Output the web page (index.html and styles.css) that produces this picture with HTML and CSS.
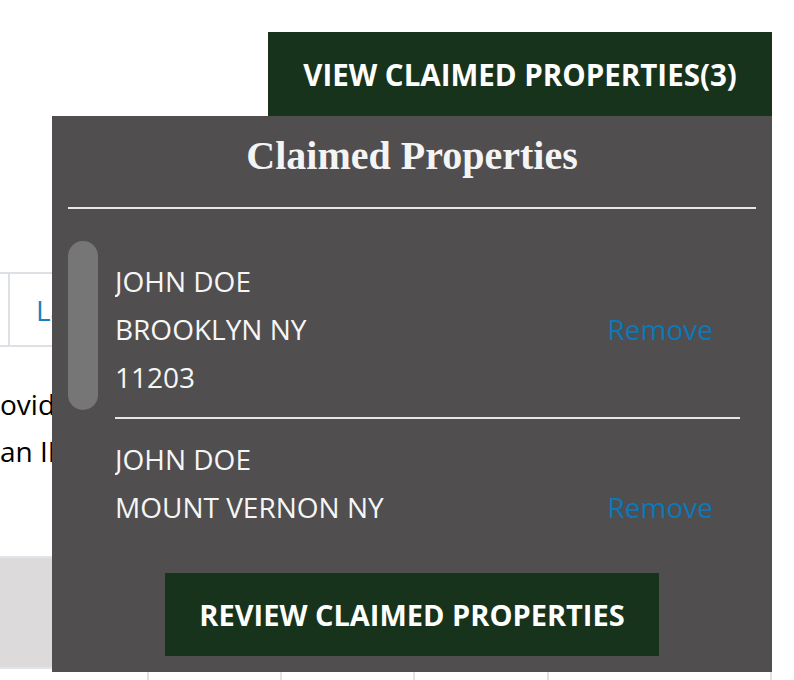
FILE: index.html
```html
<!DOCTYPE html>
<html lang="en">
<head>
<meta charset="utf-8">
<title>Claimed Properties</title>
<link rel="stylesheet" href="styles.css">
</head>
<body>
<div class="page">
  <header class="topbar">
    <button class="btn btn-view" type="button">VIEW CLAIMED PROPERTIES(3)</button>
  </header>

  <main class="content">
    <div class="tabs">
      <div class="tab tab-first"></div>
      <div class="tab"><a class="tab-link" href="#">La</a></div>
    </div>
    <p class="intro">ovided<br>an IND</p>
    <div class="band"></div>
    <div class="grid-row">
      <div class="cell c1"></div>
      <div class="cell c2"></div>
      <div class="cell c3"></div>
      <div class="cell c4"></div>
      <div class="cell c5"></div>
      <div class="cell c6"></div>
    </div>
  </main>

  <section class="dropdown">
    <h2 class="dd-title">Claimed Properties</h2>
    <hr class="dd-rule">
    <div class="dd-list">
      <div class="track"><div class="thumb"></div></div>
      <div class="items">
        <div class="item">
          <div class="addr">
            <div>JOHN DOE</div>
            <div>BROOKLYN NY</div>
            <div>11203</div>
          </div>
          <a class="remove" href="#">Remove</a>
        </div>
        <div class="item">
          <div class="addr">
            <div>JOHN DOE</div>
            <div>MOUNT VERNON NY</div>
            <div>10550</div>
          </div>
          <a class="remove" href="#">Remove</a>
        </div>
        <div class="item">
          <div class="addr">
            <div>JOHN DOE</div>
            <div>ALBANY NY</div>
            <div>12207</div>
          </div>
          <a class="remove" href="#">Remove</a>
        </div>
      </div>
    </div>
    <div class="dd-actions">
      <button class="btn btn-review" type="button">REVIEW CLAIMED PROPERTIES</button>
    </div>
  </section>
</div>
</body>
</html>
```

FILE: styles.css
```css
* { box-sizing: border-box; }

html, body {
  margin: 0;
  padding: 0;
  background: #ffffff;
}

body {
  font-family: "Open Sans", "Noto Sans", sans-serif;
  color: #000;
}

.page {
  position: relative;
  width: 794px;
  height: 680px;
  overflow: hidden;
}

.topbar {
  display: flex;
  justify-content: flex-end;
  padding: 32px 22px 0 0;
}

.btn {
  display: flex;
  align-items: center;
  justify-content: center;
  border: 0;
  margin: 0;
  background: #17331c;
  color: #ffffff;
  font-family: "Open Sans", "Noto Sans", sans-serif;
  font-weight: 700;
  font-size: 29px;
  cursor: pointer;
}

.btn-view {
  width: 504px;
  height: 84px;
  font-size: 29.5px;
}

/* background page content */
.content {
  margin-top: 156px;
  width: 772px;
}

.tabs {
  display: flex;
  height: 75px;
  border-top: 2px solid #dde1e6;
  border-bottom: 2px solid #dde1e6;
}

.tab {
  display: flex;
  align-items: center;
  white-space: nowrap;
}

.tab-first {
  width: 10px;
  border-right: 2px solid #dde1e6;
}

.tab-link {
  padding-left: 26px;
  color: #1a7fc1;
  font-size: 28px;
  text-decoration: none;
}

.intro {
  margin: 34px 0 0 0;
  font-size: 28px;
  line-height: 47px;
  white-space: nowrap;
  color: #000;
}

.band {
  margin-top: 81px;
  height: 113px;
  background: #dcdadb;
  border-top: 2px solid #e1e4e9;
  border-bottom: 2px solid #e1e4e9;
}

.grid-row {
  display: flex;
  height: 20px;
}

.cell { height: 100%; }
.c1 { width: 147px; }
.c2, .c3, .c4, .c5, .c6 { border-left: 2px solid #dfe3e8; }
.c2 { width: 133px; }
.c3 { width: 134px; }
.c4 { width: 134px; }
.c5 { width: 223px; }
.c6 { width: 1px; }

/* dropdown overlay */
.dropdown {
  position: absolute;
  left: 52px;
  top: 116px;
  width: 720px;
  height: 556px;
  background: #504e4f;
  padding: 17px 16px 0 16px;
  color: #ffffff;
}

.dd-title {
  margin: 0;
  text-align: center;
  font-family: "Liberation Serif", "Times New Roman", serif;
  font-weight: 700;
  font-size: 40px;
  line-height: 46px;
  color: #f4f4f4;
}

.dd-rule {
  margin: 28px 0 0 0;
  border: 0;
  height: 2px;
  background: #e8e8e8;
}

.dd-list {
  display: flex;
  margin-top: 32px;
  height: 300px;
}

.track {
  flex: 0 0 30px;
  height: 300px;
}

.thumb {
  width: 30px;
  height: 169px;
  border-radius: 15px;
  background: #777677;
}

.items {
  flex: 1;
  height: 300px;
  overflow: hidden;
  margin: 0 16px 0 17px;
}

.item {
  display: flex;
  align-items: center;
  justify-content: space-between;
  padding: 16px 27px 16px 0;
  border-bottom: 2px solid #e6e6e6;
  font-size: 28px;
  line-height: 48px;
}

.addr {
  color: #f6f6f6;
  white-space: nowrap;
}

.remove {
  color: #0c78b8;
  text-decoration: none;
}

.dd-actions {
  display: flex;
  justify-content: center;
  margin-top: 32px;
}

.btn-review {
  width: 494px;
  height: 83px;
}
```
